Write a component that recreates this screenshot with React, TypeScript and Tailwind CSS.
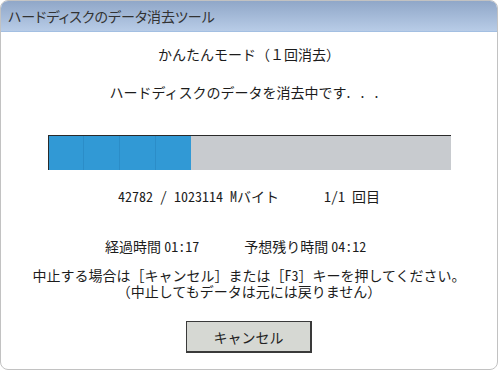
// ハードディスクのデータ消去ツール — 消去中ダイアログ

const JP = "font-['Noto_Sans_CJK_JP','Noto_Sans',sans-serif]";

function ProgressBar({ percent }: { percent: number }) {
  const segments = 4;
  return (
    <div className="mx-auto mt-[33px] flex h-[35px] w-[403px] border-t border-l border-[#2a2a2a] bg-[#c8cbcf]">
      <div className="flex h-full" style={{ width: `${percent}%` }}>
        {Array.from({ length: segments }).map((_, i) => (
          <div
            key={i}
            className="h-full flex-1 border-r border-[#2b8dc8] bg-[#3199d5] last:border-r-0"
          />
        ))}
      </div>
    </div>
  );
}

export default function App() {
  return (
    <div className={`h-[371px] w-[500px] bg-white ${JP} text-[#1c1c1c]`}>
      <div className="flex h-[370px] w-[498px] flex-col overflow-hidden rounded-[8px] border border-[#c2c2c2]">
        {/* タイトルバー */}
        <div className="h-[31px] shrink-0 border-b border-[#a3bfe2] bg-linear-to-b from-[#90a7c8] to-[#b8cce7] pl-[7px] text-[14px] leading-[30px] text-[#333] [font-feature-settings:'palt']">
          ハードディスクのデータ消去ツール
        </div>

        {/* 本文 */}
        <div className="flex flex-col text-[14px] leading-[20px]">
          <p className="mt-[12px] text-center">かんたんモード（１回消去）</p>
          <p className="mt-[18px] text-center">
            ハードディスクのデータを消去中です
            <span className="inline-block w-[14px] text-left">.</span>
            <span className="inline-block w-[14px] text-left">.</span>
            <span className="inline-block w-[14px] text-left">.</span>
          </p>

          <ProgressBar percent={35.5} />

          <div className="mt-[16px] flex justify-center gap-[45px]">
            <span>
              <span className="[font-feature-settings:'hwid']">42782 / 1023114 M</span>バイト
            </span>
            <span>
              <span className="[font-feature-settings:'hwid']">1/1 </span>回目
            </span>
          </div>

          <div className="mt-[30px] flex gap-[45px] pl-[104px]">
            <span>
              経過時間 <span className="[font-feature-settings:'hwid']">01:17</span>
            </span>
            <span>
              予想残り時間 <span className="[font-feature-settings:'hwid']">04:12</span>
            </span>
          </div>

          <p className="mt-[11px] text-center leading-[16px]">
            中止する場合は［キャンセル］または［<span className="[font-feature-settings:'hwid']">F3</span>］キーを押してください。
            <br />
            （中止してもデータは元には戻りません）
          </p>

          <button className="mx-auto mt-[22px] h-[32px] w-[126px] border border-[#3a3a3a] border-r-2 border-b-2 bg-[#d6d8d3] text-[14px] text-[#222]">
            キャンセル
          </button>
        </div>
      </div>
    </div>
  );
}
